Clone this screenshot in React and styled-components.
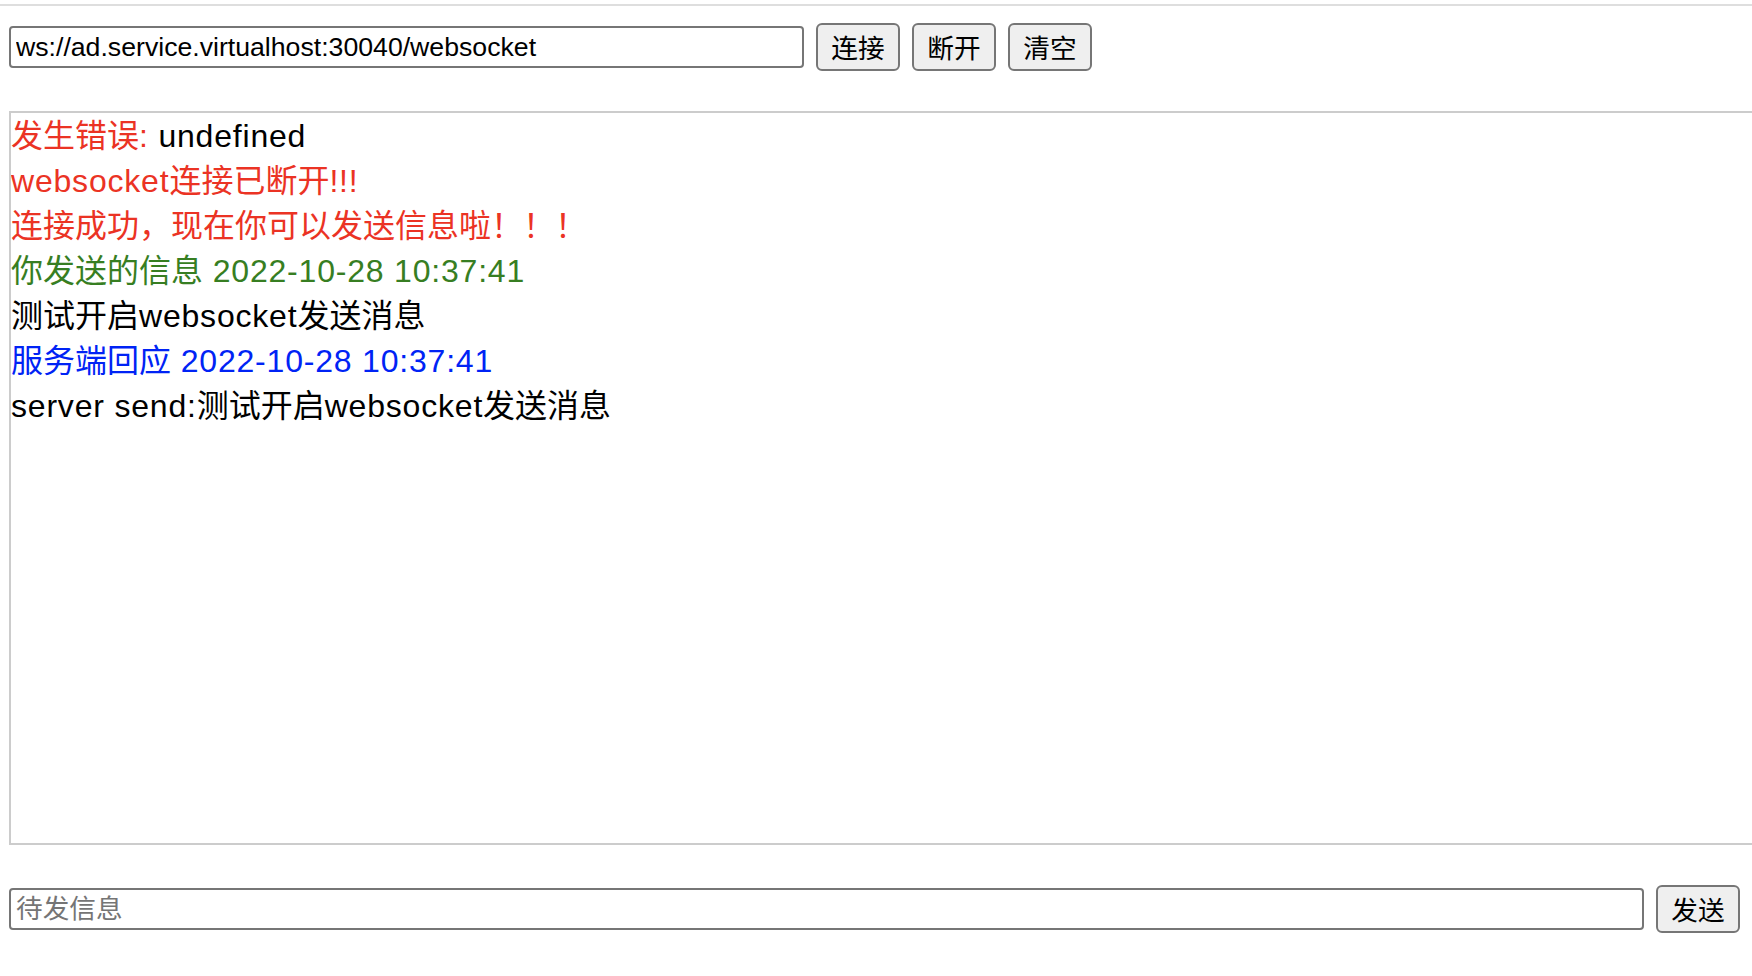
import React, { useState } from "react";
import styled, { createGlobalStyle } from "styled-components";

const GlobalStyle = createGlobalStyle`
  html, body {
    margin: 0;
    padding: 0;
    background: #ffffff;
    overflow: hidden;
  }
  body {
    font-family: "Liberation Sans", "Noto Sans CJK SC", sans-serif;
    color: #000000;
  }
`;

const Page = styled.div`
  padding-left: 9px;
  height: 976px;
  box-sizing: border-box;
`;

const TopRule = styled.div`
  height: 2px;
  margin: 4px 0 0 -9px;
  background: #dedede;
`;

const Toolbar = styled.div`
  display: flex;
  align-items: center;
  gap: 12px;
  margin-top: 17px;
`;

const TextInput = styled.input`
  box-sizing: border-box;
  height: 42px;
  width: ${(p) => p.$width || "auto"};
  flex: ${(p) => (p.$grow ? 1 : "none")};
  min-width: 0;
  padding: 0 5px;
  border: 2px solid #767676;
  border-radius: 4px;
  font-family: "Liberation Sans", "Noto Sans CJK SC", sans-serif;
  font-size: 26.67px;
  color: #000000;
  background: #ffffff;
  outline: none;

  &::placeholder {
    color: #757575;
  }
`;

const Button = styled.button`
  box-sizing: border-box;
  width: 84px;
  height: 48px;
  padding: 0 0 2px;
  flex: none;
  border: 2px solid #767676;
  border-radius: 6px;
  background: #efefef;
  font-family: "Liberation Sans", "Noto Sans CJK SC", sans-serif;
  font-size: 26.67px;
  color: #000000;
  cursor: pointer;
`;

const MessageBox = styled.div`
  box-sizing: border-box;
  margin-top: 40px;
  width: calc(100% + 40px);
  height: 734px;
  padding-top: 1px;
  border: 2px solid #cccccc;
  overflow: hidden;
  font-size: 32px;
  line-height: 45px;
`;

const Line = styled.div`
  color: ${(p) => p.$color || "#000000"};
  white-space: nowrap;
`;

const Plain = styled.span`
  color: #000000;
`;

// latin runs are a touch wider in the original rendering
const Latin = styled.span`
  letter-spacing: 0.8px;
`;

const SendRow = styled.div`
  display: flex;
  align-items: center;
  gap: 12px;
  margin-top: 40px;
  padding-right: 12px;
`;

const RED = "#eb3324";
const GREEN = "#377e22";
const BLUE = "#0023f5";

const messages = [
  { color: RED, text: "发生错误: ", tail: "undefined" },
  { color: RED, text: "websocket连接已断开!!!" },
  { color: RED, text: "连接成功，现在你可以发送信息啦！！！" },
  { color: GREEN, text: "你发送的信息 2022-10-28 10:37:41" },
  { text: "测试开启websocket发送消息" },
  { color: BLUE, text: "服务端回应 2022-10-28 10:37:41" },
  { text: "server send:测试开启websocket发送消息" },
];

function Runs({ text }) {
  return text
    .split(/([A-Za-z0-9:!.\- ]+)/)
    .filter(Boolean)
    .map((part, i) =>
      /^[A-Za-z0-9:!.\- ]+$/.test(part) ? (
        <Latin key={i}>{part}</Latin>
      ) : (
        <React.Fragment key={i}>{part}</React.Fragment>
      )
    );
}

export default function App() {
  const [url, setUrl] = useState("ws://ad.service.virtualhost:30040/websocket");
  const [draft, setDraft] = useState("");

  return (
    <Page>
      <GlobalStyle />
      <TopRule />
      <Toolbar>
        <TextInput
          $width="795px"
          value={url}
          onChange={(e) => setUrl(e.target.value)}
        />
        <Button>连接</Button>
        <Button>断开</Button>
        <Button>清空</Button>
      </Toolbar>
      <MessageBox>
        {messages.map((m, i) => (
          <Line key={i} $color={m.color}>
            <Runs text={m.text} />
            {m.tail && (
              <Plain>
                <Runs text={m.tail} />
              </Plain>
            )}
          </Line>
        ))}
      </MessageBox>
      <SendRow>
        <TextInput
          $grow
          placeholder="待发信息"
          value={draft}
          onChange={(e) => setDraft(e.target.value)}
        />
        <Button>发送</Button>
      </SendRow>
    </Page>
  );
}
